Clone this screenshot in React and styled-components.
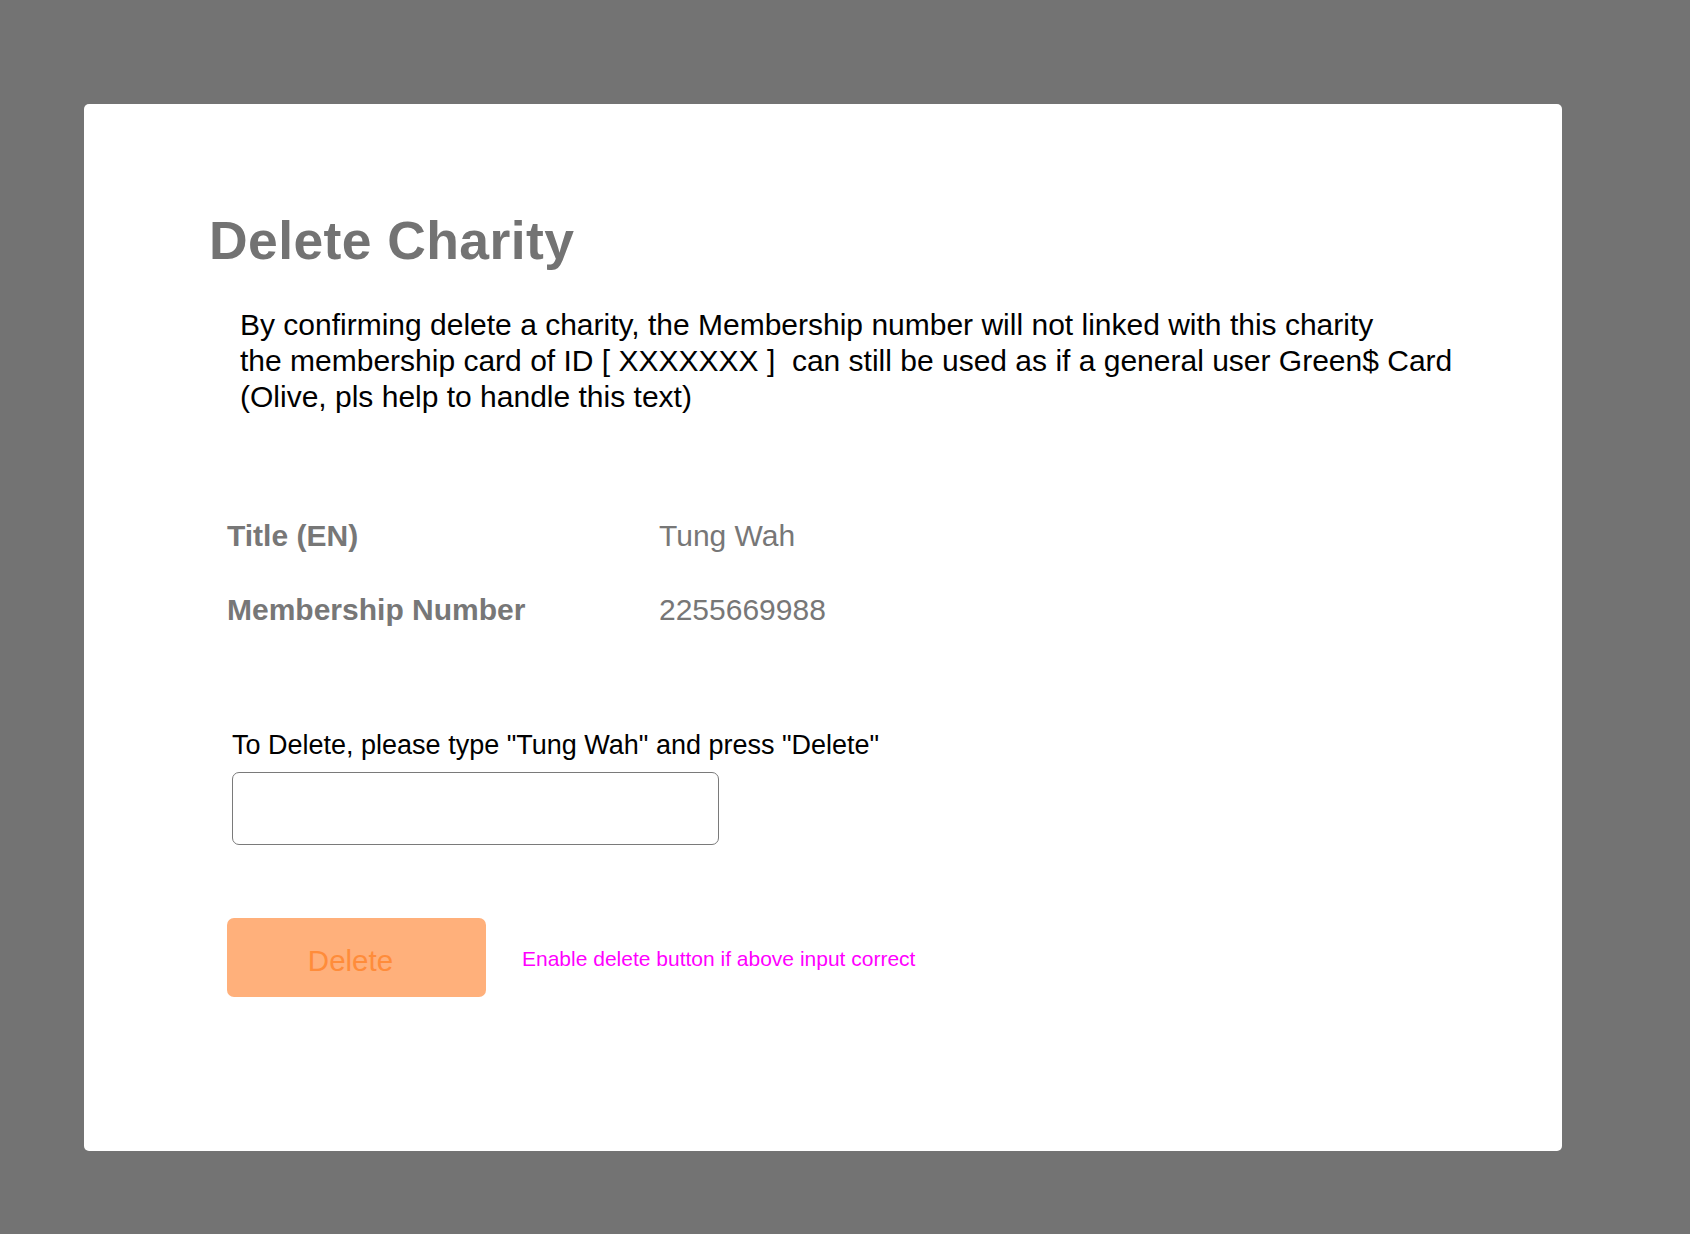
import React from "react";
import styled, { createGlobalStyle } from "styled-components";

const GlobalStyle = createGlobalStyle`
  html, body {
    margin: 0;
    padding: 0;
    background: #737373;
  }
  body {
    font-family: "Liberation Sans", Arial, Helvetica, sans-serif;
  }
  * {
    box-sizing: border-box;
  }
`;

const Page = styled.div`
  min-height: 1234px;
  background: #737373;
  padding: 104px 0 0 84px;
`;

const Card = styled.div`
  width: 1478px;
  height: 1047px;
  background: #ffffff;
  border-radius: 5px;
  padding: 107px 0 0 125px;
  display: flex;
  flex-direction: column;
  align-items: flex-start;
`;

const Title = styled.h1`
  margin: 0;
  font-size: 53.5px;
  line-height: 60px;
  font-weight: 700;
  letter-spacing: 0.4px;
  color: #737373;
`;

const Notice = styled.p`
  margin: 36px 0 0 31px;
  font-size: 30px;
  line-height: 36px;
  color: #000;
  white-space: pre;
`;

const InfoGrid = styled.div`
  margin: 103px 0 0 18px;
  display: grid;
  grid-template-columns: 432px auto;
  row-gap: 38px;
  font-size: 30px;
  line-height: 36px;
  color: #777777;
`;

const InfoLabel = styled.div`
  font-weight: 700;
`;

const InfoValue = styled.div`
  font-weight: 400;
`;

const ConfirmLabel = styled.label`
  margin: 101px 0 0 23px;
  font-size: 27px;
  line-height: 32px;
  color: #000;
`;

const ConfirmInput = styled.input`
  margin: 11px 0 0 23px;
  width: 487px;
  height: 73px;
  border: 1.5px solid #7a7a7a;
  border-radius: 7px;
  background: #fff;
  font-family: inherit;
  font-size: 26px;
  padding: 0 16px;
  outline: none;
`;

const ActionRow = styled.div`
  margin: 73px 0 0 18px;
  display: flex;
  align-items: center;
  gap: 36px;
`;

const DeleteButton = styled.button`
  width: 259px;
  height: 79px;
  border: none;
  border-radius: 7px;
  background: #ffb07b;
  color: #ff8c3a;
  font-family: inherit;
  font-size: 29.5px;
  padding: 6px 12px 0 0;
  cursor: not-allowed;
`;

const Hint = styled.span`
  margin-top: 2px;
  font-size: 21px;
  color: #ff00ff;
`;

const info = [
  { label: "Title (EN)", value: "Tung Wah" },
  { label: "Membership Number", value: "2255669988" },
];

export default function App() {
  return (
    <>
      <GlobalStyle />
      <Page>
        <Card>
          <Title>Delete Charity</Title>
          <Notice>
            {"By confirming delete a charity, the Membership number will not linked with this charity\n" +
              "the membership card of ID [ XXXXXXX ]  can still be used as if a general user Green$ Card\n" +
              "(Olive, pls help to handle this text)"}
          </Notice>
          <InfoGrid>
            {info.map((row) => (
              <React.Fragment key={row.label}>
                <InfoLabel>{row.label}</InfoLabel>
                <InfoValue>{row.value}</InfoValue>
              </React.Fragment>
            ))}
          </InfoGrid>
          <ConfirmLabel htmlFor="confirm">
            To Delete, please type "Tung Wah" and press "Delete"
          </ConfirmLabel>
          <ConfirmInput id="confirm" type="text" />
          <ActionRow>
            <DeleteButton disabled>Delete</DeleteButton>
            <Hint>Enable delete button if above input correct</Hint>
          </ActionRow>
        </Card>
      </Page>
    </>
  );
}
